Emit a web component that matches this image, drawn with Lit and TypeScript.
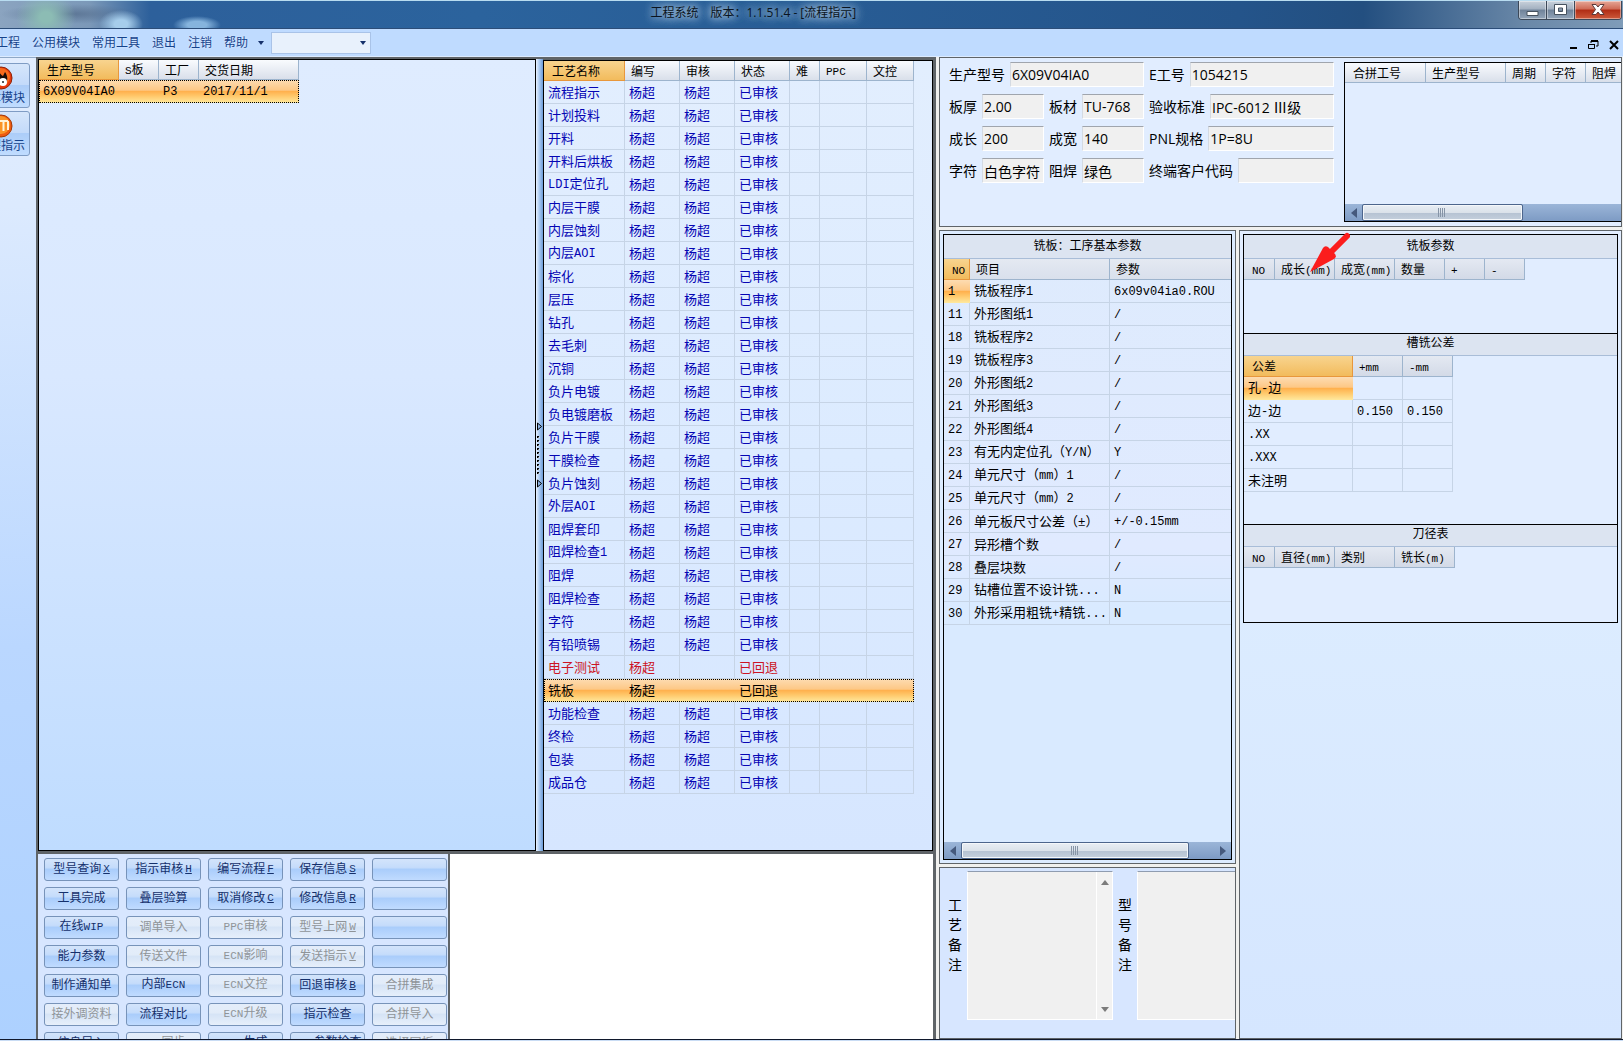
import { LitElement, html, css, svg, nothing } from "lit";
import { customElement, property } from "lit/decorators.js";
import { classMap } from "lit/directives/class-map.js";
import { styleMap } from "lit/directives/style-map.js";

interface Column {
  label: string;
  width?: number;
  sorted?: boolean;
}

interface Row {
  cells: string[];
  tone?: "blue" | "red";
  selected?: "row" | "cell";
}

/* Wraps Latin runs so that they get the narrow fixed-width face. */
const mixed = (text: string) =>
  text
    .split(/([\x21-\x7e]+)/)
    .filter((part) => part !== "")
    .map((part) => (/^[\x21-\x7e]/.test(part) ? html`<span class="lat">${part}</span>` : part));

@customElement("data-grid")
export class DataGrid extends LitElement {
  @property({ attribute: false }) columns: Column[] = [];
  @property({ attribute: false }) rows: Row[] = [];
  @property() label = "";

  static styles = css`
    :host {
      display: block;
      overflow: hidden;
    }
    .grid {
      border-collapse: separate;
      border-spacing: 0;
      table-layout: fixed;
      width: 1px;
    }
    .grid.fill {
      width: 100%;
    }
    .head {
      box-sizing: border-box;
      height: var(--head-height, 20px);
      padding: 2px 0 0 6px;
      font-size: 12px;
      font-weight: 400;
      line-height: 16px;
      text-align: left;
      white-space: nowrap;
      overflow: hidden;
      color: #000;
      background: var(--head-bg, linear-gradient(#f9fbfe, #d9dfea));
      border-right: 1px solid #9db4cd;
      border-bottom: 1px solid #9db4cd;
    }
    .head:first-child {
      padding-left: 8px;
    }
    .head.sorted {
      background: linear-gradient(#f8d48f, #f2bb5c);
      border-color: #e8973c;
    }
    .head .lat {
      font-size: 11px;
    }
    .cell {
      box-sizing: border-box;
      height: 23px;
      padding: 0 0 0 4px;
      font-size: 13px;
      line-height: 20px;
      white-space: nowrap;
      overflow: hidden;
      border-right: 1px solid #c6d4e6;
      border-bottom: 1px solid #c6d4e6;
    }
    .fill .cell:last-child,
    .fill .head:last-child {
      border-right: 0;
    }
    .blue {
      color: #0505b4;
    }
    .red {
      color: #cc1424;
    }
    .row-selected {
      outline: 1px dotted #000;
      outline-offset: -1px;
    }
    .row-selected .cell,
    .cell-selected .cell:first-child {
      border-color: transparent;
      background: linear-gradient(#fddcb2, #fdc886 44%, #ffb14e 50%, #ffc668 68%, #ffe99e) border-box;
    }
    .lat {
      font-family: "Liberation Mono", monospace;
      font-size: 12px;
    }
  `;

  render() {
    const fill = this.columns.some((c) => c.width === undefined);
    return html`<table class=${classMap({ grid: true, fill })} aria-label=${this.label}>
      <colgroup>
        ${this.columns.map((c) =>
          c.width === undefined ? html`<col />` : html`<col style=${styleMap({ width: `${c.width}px` })} />`
        )}
      </colgroup>
      <thead>
        <tr>
          ${this.columns.map(
            (c) => html`<th scope="col" class=${classMap({ head: true, sorted: !!c.sorted })}>${mixed(c.label)}</th>`
          )}
        </tr>
      </thead>
      <tbody>
        ${this.rows.map(
          (r) => html`<tr
            class=${classMap({
              blue: r.tone === "blue",
              red: r.tone === "red",
              "row-selected": r.selected === "row",
              "cell-selected": r.selected === "cell",
            })}
          >
            ${this.columns.map((_, i) => html`<td class="cell">${mixed(r.cells[i] ?? "")}</td>`)}
          </tr>`
        )}
      </tbody>
    </table>`;
  }
}

@customElement("h-scroll")
export class HScroll extends LitElement {
  @property({ type: Number }) thumb = 50;
  @property({ type: Boolean, attribute: "no-end" }) noEnd = false;

  static styles = css`
    :host {
      display: flex;
      height: 17px;
      background: linear-gradient(#9bb5d8, #7d9bc4);
    }
    .arrow {
      flex: none;
      width: 17px;
      padding: 0;
      border: 0;
      background: none;
      display: flex;
      align-items: center;
      justify-content: center;
    }
    .track {
      flex: 1;
    }
    .thumb {
      box-sizing: border-box;
      height: 17px;
      border: 1px solid #4c658c;
      border-radius: 2px;
      background: linear-gradient(#e9eef4, #dbe2ea 50%, #b6c3d3 55%, #c4cfdc);
      box-shadow: inset 0 0 0 1px #f4f7fa;
      display: flex;
      align-items: center;
      justify-content: center;
    }
  `;

  render() {
    return html`
      <button class="arrow" aria-label="向左">
        <svg width="6" height="10" viewBox="0 0 6 10"><path d="M6 0v10L0 5z" fill="#45597c" /></svg>
      </button>
      <div class="track">
        <div class="thumb" style=${styleMap({ width: `${this.thumb}%` })}>
          <svg width="8" height="9" viewBox="0 0 8 9">
            <path d="M.5 0v9M2.5 0v9M4.5 0v9M6.5 0v9" stroke="#8694a6" stroke-width="1" />
          </svg>
        </div>
      </div>
      ${this.noEnd
        ? nothing
        : html`<button class="arrow" aria-label="向右">
            <svg width="6" height="10" viewBox="0 0 6 10"><path d="M0 0v10l6-5z" fill="#45597c" /></svg>
          </button>`}
    `;
  }
}

const steps = [
  "流程指示", "计划投料", "开料", "开料后烘板", "LDI定位孔", "内层干膜", "内层蚀刻", "内层AOI", "棕化", "层压",
  "钻孔", "去毛刺", "沉铜", "负片电镀", "负电镀磨板", "负片干膜", "干膜检查", "负片蚀刻", "外层AOI", "阻焊套印",
  "阻焊检查1", "阻焊", "阻焊检查", "字符", "有铅喷锡", "电子测试", "铣板", "功能检查", "终检", "包装", "成品仓",
];

const stepRows: Row[] = steps.map((name) => {
  if (name === "电子测试") return { cells: [name, "杨超", "", "已回退"], tone: "red" };
  if (name === "铣板") return { cells: [name, "杨超", "", "已回退"], selected: "row" };
  return { cells: [name, "杨超", "杨超", "已审核"], tone: "blue" };
});

const stepColumns: Column[] = [
  { label: "工艺名称", width: 81, sorted: true },
  { label: "编写", width: 55 },
  { label: "审核", width: 55 },
  { label: "状态", width: 55 },
  { label: "难", width: 30 },
  { label: "PPC", width: 47 },
  { label: "文控", width: 47 },
];

const modelColumns: Column[] = [
  { label: "生产型号", width: 80, sorted: true },
  { label: "S板", width: 40 },
  { label: "工厂", width: 40 },
  { label: "交货日期", width: 100 },
];

const paramColumns: Column[] = [{ label: "NO", width: 26, sorted: true }, { label: "项目", width: 140 }, { label: "参数" }];

const paramRows: Row[] = [
  { cells: ["1", "铣板程序1", "6x09v04ia0.ROU"], selected: "cell" },
  { cells: ["11", "外形图纸1", "/"] },
  { cells: ["18", "铣板程序2", "/"] },
  { cells: ["19", "铣板程序3", "/"] },
  { cells: ["20", "外形图纸2", "/"] },
  { cells: ["21", "外形图纸3", "/"] },
  { cells: ["22", "外形图纸4", "/"] },
  { cells: ["23", "有无内定位孔（Y/N）", "Y"] },
  { cells: ["24", "单元尺寸（mm）1", "/"] },
  { cells: ["25", "单元尺寸（mm）2", "/"] },
  { cells: ["26", "单元板尺寸公差（±）", "+/-0.15mm"] },
  { cells: ["27", "异形槽个数", "/"] },
  { cells: ["28", "叠层块数", "/"] },
  { cells: ["29", "钻槽位置不设计铣...", "N"] },
  { cells: ["30", "外形采用粗铣+精铣...", "N"] },
];

const mergeColumns: Column[] = [
  { label: "合拼工号", width: 81 },
  { label: "生产型号", width: 80 },
  { label: "周期", width: 40 },
  { label: "字符", width: 40 },
  { label: "阻焊", width: 60 },
];

const millColumns: Column[] = [
  { label: "NO", width: 31 },
  { label: "成长(mm)", width: 60 },
  { label: "成宽(mm)", width: 60 },
  { label: "数量", width: 50 },
  { label: "+", width: 40 },
  { label: "-", width: 40 },
];

const slotColumns: Column[] = [
  { label: "公差", width: 109, sorted: true },
  { label: "+mm", width: 50 },
  { label: "-mm", width: 50 },
];

const slotRows: Row[] = [
  { cells: ["孔-边"], selected: "cell" },
  { cells: ["边-边", "0.150", "0.150"] },
  { cells: [".XX"] },
  { cells: [".XXX"] },
  { cells: ["未注明"] },
];

const cutterColumns: Column[] = [
  { label: "NO", width: 31 },
  { label: "直径(mm)", width: 60 },
  { label: "类别", width: 60 },
  { label: "铣长(m)", width: 60 },
];

interface Command {
  text: string;
  key?: string;
  off?: boolean;
}

const commands: Command[] = [
  { text: "型号查询", key: "X" }, { text: "指示审核", key: "H" }, { text: "编写流程", key: "F" }, { text: "保存信息", key: "S" }, { text: "" },
  { text: "工具完成" }, { text: "叠层验算" }, { text: "取消修改", key: "C" }, { text: "修改信息", key: "R" }, { text: "" },
  { text: "在线WIP" }, { text: "调单导入", off: true }, { text: "PPC审核", off: true }, { text: "型号上网", key: "W", off: true }, { text: "" },
  { text: "能力参数" }, { text: "传送文件", off: true }, { text: "ECN影响", off: true }, { text: "发送指示", key: "V", off: true }, { text: "" },
  { text: "制作通知单" }, { text: "内部ECN" }, { text: "ECN文控", off: true }, { text: "回退审核", key: "B" }, { text: "合拼集成", off: true },
  { text: "接外调资料", off: true }, { text: "流程对比" }, { text: "ECN升级", off: true }, { text: "指示检查" }, { text: "合拼导入", off: true },
  { text: "信息导入" }, { text: "MES同步", off: true }, { text: "ECN生成" }, { text: "ECN参数检查" }, { text: "选择同板", off: true },
];

const fields = [
  { id: "model", label: "生产型号", value: "6X09V04IA0", wide: true },
  { id: "job", label: "E工号", value: "1054215" },
  { id: "thick", label: "板厚", value: "2.00" },
  { id: "material", label: "板材", value: "TU-768" },
  { id: "standard", label: "验收标准", value: "IPC-6012 Ⅲ级" },
  { id: "length", label: "成长", value: "200" },
  { id: "width", label: "成宽", value: "140" },
  { id: "pnl", label: "PNL规格", value: "1P=8U" },
  { id: "legend", label: "字符", value: "白色字符" },
  { id: "mask", label: "阻焊", value: "绿色" },
  { id: "customer", label: "终端客户代码", value: "" },
];

const flame = svg`<circle cx="12" cy="12" r="11" fill="#e8380c" stroke="#8c2408"/>
  <circle cx="12" cy="11" r="9" fill="#f86a1c"/>
  <path d="M7 19c-3-5 1-8 3-14 1 3 2 4 4 5l2-4c3 4 3 9 0 13z" fill="#180c08"/>
  <circle cx="14" cy="16" r="4" fill="#fff"/><circle cx="14" cy="16" r="1" fill="#222"/>`;

const bars = svg`<circle cx="12" cy="12" r="11" fill="#ef5a10" stroke="#a03a08"/>
  <circle cx="12" cy="11" r="9" fill="#fa9426"/>
  <path d="M5 17V7h14M10 7v10M14.500 7v10M19 7v9" stroke="#fff3d8" stroke-width="2" fill="none"/>`;

@customElement("app-root")
export class AppRoot extends LitElement {
  static styles = css`
    :host {
      display: block;
      font-family: "Open Sans", "Noto Sans CJK SC", sans-serif;
      font-size: 12px;
      color: #000;
    }
    .window {
      position: relative;
      height: 100vh;
      display: grid;
      grid-template-rows: 29px 28px minmax(0, 1fr) 2px;
      overflow: hidden;
    }
    button {
      font: inherit;
      color: inherit;
    }

    /* title bar */
    .title-bar {
      display: grid;
      grid-template-columns: 649fr auto 765fr;
      box-sizing: border-box;
      border-top: 1px solid #b8dcf0;
      border-bottom: 1px solid #2c4d78;
      background:
        radial-gradient(ellipse 22px 14px at 121px 23px, #a6cdeb 30%, transparent),
        radial-gradient(ellipse 24px 9px at 197px 24px, #86b4dd 40%, transparent),
        radial-gradient(ellipse 30px 26px at 46px 16px, #8cbcb4 20%, transparent),
        radial-gradient(ellipse 70px 10px at 70px 13px, #4c6484aa, transparent),
        linear-gradient(90deg, #8ba4c0, #7b98b8 90px, #2d609b 150px, #2b639d 480px, #24548a 1240px, #234f80 84%, #6a88a8 94%, #7f9cb9);
    }
    .title {
      grid-column: 2;
      margin: 0;
      font-size: 12px;
      font-weight: 400;
      line-height: 24px;
      color: #0a1420;
      white-space: pre;
      text-shadow: 0 0 8px #b4cde6, 0 0 8px #b4cde6, 0 0 12px #8fb0d2;
    }
    .window-buttons {
      justify-self: end;
      display: flex;
      height: 18px;
      margin-right: 1px;
      border: 1px solid #3c4858;
      border-top: 0;
      border-radius: 0 0 4px 4px;
      overflow: hidden;
    }
    .win {
      width: 28px;
      padding: 0;
      border: 0;
      border-right: 1px solid #3c4858;
      display: flex;
      align-items: center;
      justify-content: center;
      background: linear-gradient(#c9d2dc, #a2b0c0 45%, #6f8299 50%, #93a5b9);
      box-shadow: inset 0 0 0 1px #ffffff66;
    }
    .win.close {
      width: 46px;
      border-right: 0;
      background: linear-gradient(#e6a898, #cf6a55 45%, #b02c14 50%, #cd5a3c);
    }

    /* menu bar */
    .menu-bar {
      display: flex;
      align-items: center;
      gap: 12px;
      box-sizing: border-box;
      padding-right: 4px;
      background: #bfdbff;
      border-bottom: 1px solid #dcebff;
    }
    .menu {
      flex: none;
      padding: 0;
      border: 0;
      background: none;
      color: #15428b;
      line-height: 20px;
      text-shadow: 0 0 2px #e6f1ff;
    }
    .menu:first-child {
      margin-left: -4px;
    }
    .menu.more {
      display: flex;
      margin-left: -2px;
    }
    .combo {
      position: relative;
      margin-left: -5px;
    }
    .select {
      display: block;
      appearance: none;
      width: 100px;
      height: 22px;
      border: 1px solid #a9c3e8;
      border-radius: 0;
      background: #e8f1fc;
    }
    .caret {
      position: absolute;
      right: 5px;
      top: 9px;
      pointer-events: none;
    }
    .mdi {
      display: flex;
      align-items: center;
      gap: 10px;
      margin-left: auto;
      padding-top: 4px;
    }
    .mdi-button {
      display: flex;
      padding: 0;
      border: 0;
      background: none;
    }

    /* main areas */
    .main {
      display: grid;
      grid-template-columns: 36px minmax(0, 900fr) minmax(0, 687fr);
      min-height: 0;
    }
    .sidebar {
      display: flex;
      flex-direction: column;
      gap: 3px;
      padding-top: 5px;
      overflow: hidden;
      background: linear-gradient(#e2edfe, #dceafe 15%, #bad7ff 60%, #add1ff);
      border-top: 1px solid #8fa8c6;
      box-sizing: border-box;
    }
    .tool {
      flex: none;
      box-sizing: border-box;
      width: 58px;
      height: 45px;
      margin-left: -28px;
      padding: 2px 0 0;
      display: flex;
      flex-direction: column;
      align-items: center;
      border: 1px solid #7f9cc4;
      border-radius: 3px;
      background: linear-gradient(#d6e6fb, #c3dafa 48%, #accdf8 50%, #c0dcff);
      color: #15428b;
      line-height: 16px;
    }
    .left {
      display: grid;
      grid-template-rows: minmax(0, 1fr) 185px;
      row-gap: 3px;
      padding: 2px 3px 0 2px;
      background: #5f6468;
      min-height: 0;
    }
    .upper {
      display: grid;
      grid-template-columns: minmax(0, 498fr) 7px minmax(0, 390fr);
      min-height: 0;
    }
    .box {
      box-sizing: border-box;
      border: 1px solid #000;
      min-width: 0;
      min-height: 0;
    }
    .models {
      background: linear-gradient(#dfecff, #d9e8ff 40%, #bfdcff);
    }
    .steps {
      margin-top: 1px;
      background: linear-gradient(#e2eefe, #dcebff 50%, #d6e6ff);
    }
    .splitter {
      display: flex;
      flex-direction: column;
      align-items: center;
      justify-content: center;
      background: linear-gradient(90deg, #e9f2ff, #a8c8f0 50%, #6b9bd8);
    }
    .lower {
      display: grid;
      grid-template-columns: 410px minmax(0, 1fr);
      column-gap: 2px;
      min-height: 0;
    }
    .commands {
      display: grid;
      grid-template-columns: repeat(5, 75px);
      grid-auto-rows: 23px;
      gap: 6px 7px;
      padding: 4px 0 0 6px;
      overflow: hidden;
      background: #d7e6ff;
    }
    .command {
      display: flex;
      align-items: center;
      justify-content: center;
      gap: 2px;
      padding: 0 0 2px;
      white-space: nowrap;
      line-height: 16px;
      border: 1px solid #7793b9;
      border-radius: 3px;
      color: #15306b;
      background: linear-gradient(#d3e4fb, #c5dcfb 40%, #aacdfb 50%, #c0dbff);
    }
    .command:disabled {
      color: #8f9498;
      background: linear-gradient(#e4edfa, #e2ecf9 40%, #d6e4f6 50%, #e6effb);
    }
    .key {
      text-decoration: underline;
    }
    .lat {
      font-family: "Liberation Mono", monospace;
      font-size: 11px;
    }
    .blank {
      background: #fff;
    }

    /* right area */
    .right {
      display: grid;
      grid-template-rows: 170px minmax(0, 1fr);
      row-gap: 3px;
      padding: 0 1px 0 3px;
      background: #f0f0ee;
      min-height: 0;
    }
    .frame {
      box-sizing: border-box;
      border: 1px solid #5f6468;
      min-width: 0;
      min-height: 0;
    }
    .info {
      display: grid;
      grid-template-columns: auto minmax(0, 1fr);
      column-gap: 10px;
      padding: 4px 0 4px 9px;
      background: #e1edff;
    }
    .form {
      display: grid;
      grid-template-columns: 95px 95px 185px;
      grid-auto-rows: 25px;
      gap: 7px 5px;
      align-content: start;
    }
    .field {
      display: flex;
      align-items: center;
      gap: 5px;
      min-width: 0;
    }
    .field.wide {
      grid-column: span 2;
    }
    .label {
      flex: none;
      font-size: 14px;
      line-height: 20px;
    }
    .input {
      flex: 1;
      min-width: 0;
      box-sizing: border-box;
      height: 25px;
      padding: 0 1px;
      font: inherit;
      font-size: 14px;
      background: #f0f0f0;
      border: 1px solid #fff;
      border-top-color: #a0a5ad;
      border-left-color: #d4dae2;
    }
    .merge {
      display: flex;
      flex-direction: column;
      border-right: 0;
      overflow: hidden;
      background: #e1edff;
    }
    .grow {
      flex: 1;
    }
    .detail {
      display: grid;
      grid-template-columns: 297px minmax(0, 1fr);
      column-gap: 3px;
      min-height: 0;
    }
    .detail-left {
      display: grid;
      grid-template-rows: minmax(0, 1fr) 172px;
      row-gap: 3px;
      min-height: 0;
    }
    .padded {
      display: flex;
      flex-direction: column;
      padding: 3px;
      background: #dcebff;
    }
    .params {
      flex: 1;
      display: flex;
      flex-direction: column;
      background: linear-gradient(#deebfd, #e0eaff 50%, #d9eaff 60%);
      --head-height: 21px;
      --head-bg: linear-gradient(#e4e9f2, #d9e0ec);
    }
    .caption {
      margin: 0;
      box-sizing: border-box;
      height: 24px;
      font-size: 12px;
      font-weight: 400;
      line-height: 22px;
      text-align: center;
      background: #dce4f1;
      border-bottom: 1px solid #a9bdd8;
    }
    .caption.low {
      height: 22px;
      line-height: 18px;
    }
    .side {
      background: linear-gradient(#e2edff, #dcecff 45%, #d5e6ff);
    }
    .stack {
      display: grid;
      grid-template-rows: 98px 190px 97px;
      row-gap: 1px;
      background: #000;
      --head-height: 21px;
      --head-bg: linear-gradient(#e4e9f2, #d3dae7);
    }
    .section {
      background: #e1edff;
      min-width: 0;
    }
    .notes {
      display: grid;
      grid-template-columns: 14px 146px 14px 146px;
      column-gap: 5px;
      padding: 3px 0 18px 8px;
      overflow: hidden;
      background: #d7e6ff;
    }
    .note-label {
      width: 14px;
      padding-top: 24px;
      font-size: 14px;
      line-height: 20px;
      word-break: break-all;
    }
    .note {
      display: flex;
      border: 1px solid #fff;
      border-top-color: #8f9cb0;
      background: #f0f0f0;
    }
    .text {
      flex: 1;
      min-width: 0;
      padding: 2px;
      border: 0;
      resize: none;
      outline: none;
      background: none;
      font: inherit;
      font-size: 14px;
      overflow: hidden;
    }
    .note-scroll {
      width: 16px;
      box-sizing: border-box;
      padding: 8px 0 7px;
      border-left: 1px solid #fff;
      display: flex;
      flex-direction: column;
      align-items: center;
      justify-content: space-between;
      background: #f2f2f2;
    }
    .status {
      background: #c9dcf4;
      border-top: 1px solid #10182c;
    }
    .pointer {
      position: absolute;
      left: 1308px;
      top: 232px;
      pointer-events: none;
    }
  `;

  private command(c: Command) {
    return html`<button class="command" ?disabled=${c.off} aria-label=${c.text || "空"}>
      ${c.text ? html`<span>${mixed(c.text)}</span>` : nothing}${c.key
        ? html`<span class="lat key">${c.key}</span>`
        : nothing}
    </button>`;
  }

  private note(id: string, label: string) {
    return html`<label class="note-label" for=${id}>${label}</label>
      <div class="note">
        <textarea class="text" id=${id} readonly></textarea>
        <div class="note-scroll">
          <svg width="8" height="5" viewBox="0 0 8 5"><path d="M0 5h8L4 0z" fill="#7c7c7c" /></svg>
          <svg width="8" height="5" viewBox="0 0 8 5"><path d="M0 0h8L4 5z" fill="#7c7c7c" /></svg>
        </div>
      </div>`;
  }

  render() {
    return html`<div class="window">
      <header class="title-bar">
        <h1 class="title">工程系统　版本：1.1.51.4 - [流程指示]</h1>
        <div class="window-buttons">
          <button class="win" aria-label="最小化">
            <svg width="13" height="12" viewBox="0 0 13 12"><path d="M1 7.500h11v4H1z" fill="#fff" stroke="#46525f" /></svg>
          </button>
          <button class="win" aria-label="还原">
            <svg width="13" height="12" viewBox="0 0 13 12">
              <path d="M.5.5h12v10H.5zM4.500 4v3.500h4V4z" fill="#fff" fill-rule="evenodd" stroke="#46525f" />
            </svg>
          </button>
          <button class="win close" aria-label="关闭">
            <svg width="14" height="12" viewBox="0 0 14 12">
              <path d="M1 .5h4l2 2.500L9 .5h4L9.500 5.500l3.500 5H9L7 8l-2 2.500H1l3.500-5z" fill="#fff" stroke="#5a3a3a" />
            </svg>
          </button>
        </div>
      </header>

      <nav class="menu-bar">
        ${["工程", "公用模块", "常用工具", "退出", "注销", "帮助"].map((m) => html`<button class="menu">${m}</button>`)}
        <button class="menu more" aria-label="更多">
          <svg width="6" height="4" viewBox="0 0 6 4"><path d="M0 0h6L3 4z" fill="#15306b" /></svg>
        </button>
        <div class="combo">
          <select class="select" aria-label="搜索"><option></option></select>
          <svg class="caret" width="6" height="4" viewBox="0 0 6 4"><path d="M0 0h6L3 4z" fill="#15306b" /></svg>
        </div>
        <div class="mdi">
          <button class="mdi-button" aria-label="最小化窗口">
            <svg width="8" height="10" viewBox="0 0 8 10"><path d="M0 7h7v2H0z" /></svg>
          </button>
          <button class="mdi-button" aria-label="还原窗口">
            <svg width="11" height="10" viewBox="0 0 11 10">
              <path d="M3 3V1h7v5H8M.5 4.500h6v4h-6z" fill="none" stroke="#000" />
              <path d="M3 0h7v2H3zM0 4h7v1H0z" />
            </svg>
          </button>
          <button class="mdi-button" aria-label="关闭窗口">
            <svg width="10" height="10" viewBox="0 0 10 10"><path d="M1 1l8 8M9 1L1 9" stroke="#000" stroke-width="2" /></svg>
          </button>
        </div>
      </nav>

      <main class="main">
        <aside class="sidebar">
          <button class="tool"><svg width="24" height="24" viewBox="0 0 24 24">${flame}</svg>基本模块</button>
          <button class="tool"><svg width="24" height="24" viewBox="0 0 24 24">${bars}</svg>流程指示</button>
        </aside>

        <section class="left">
          <div class="upper">
            <div class="box models">
              <data-grid
                label="生产型号"
                .columns=${modelColumns}
                .rows=${[{ cells: ["6X09V04IA0", "", "P3", "2017/11/1"], selected: "row" }]}
              ></data-grid>
            </div>
            <div class="splitter">
              <svg width="7" height="66" viewBox="0 0 7 66">
                <path d="M1.500 1v7l4-3.500zM1.500 58v7l4-3.500z" fill="#8fb4e4" stroke="#000" />
                <path d="M2 14v38" stroke="#000" stroke-width="2" stroke-dasharray="2 2" />
                <path d="M3 15v38" stroke="#fff" stroke-width="1" stroke-dasharray="1 3" />
              </svg>
            </div>
            <div class="box steps">
              <data-grid label="工艺流程" .columns=${stepColumns} .rows=${stepRows}></data-grid>
            </div>
          </div>
          <div class="lower">
            <div class="commands">${commands.map((c) => this.command(c))}</div>
            <div class="blank"></div>
          </div>
        </section>

        <section class="right">
          <div class="frame info">
            <div class="form">
              ${fields.map(
                (f) => html`<div class=${classMap({ field: true, wide: !!f.wide })}>
                  <label class="label" for=${f.id}>${f.label}</label>
                  <input class="input" id=${f.id} .value=${f.value} readonly />
                </div>`
              )}
            </div>
            <div class="box merge">
              <data-grid class="grow" label="合拼" .columns=${mergeColumns}></data-grid>
              <h-scroll thumb="62" no-end></h-scroll>
            </div>
          </div>
          <div class="detail">
            <div class="detail-left">
              <div class="frame padded">
                <div class="box params">
                  <h2 class="caption">铣板：工序基本参数</h2>
                  <data-grid class="grow" label="工序基本参数" .columns=${paramColumns} .rows=${paramRows}></data-grid>
                  <h-scroll thumb="90"></h-scroll>
                </div>
              </div>
              <div class="frame notes">${this.note("craft", "工艺备注")}${this.note("modelnote", "型号备注")}</div>
            </div>
            <div class="frame padded side">
              <div class="box stack">
                <div class="section">
                  <h2 class="caption">铣板参数</h2>
                  <data-grid label="铣板参数" .columns=${millColumns}></data-grid>
                </div>
                <div class="section">
                  <h2 class="caption low">槽铣公差</h2>
                  <data-grid label="槽铣公差" .columns=${slotColumns} .rows=${slotRows}></data-grid>
                </div>
                <div class="section">
                  <h2 class="caption low">刀径表</h2>
                  <data-grid label="刀径表" .columns=${cutterColumns}></data-grid>
                </div>
              </div>
            </div>
          </div>
        </section>
      </main>
      <footer class="status"></footer>
      <svg class="pointer" width="42" height="42" viewBox="0 0 42 42">
        <path d="M39 4L24 19" stroke="#fb1d1d" stroke-width="6" stroke-linecap="round" />
        <path d="M2 40L15 16q2-3 5-1l7 7q2 3-1 5z" fill="#fb1d1d" />
      </svg>
    </div>`;
  }
}
